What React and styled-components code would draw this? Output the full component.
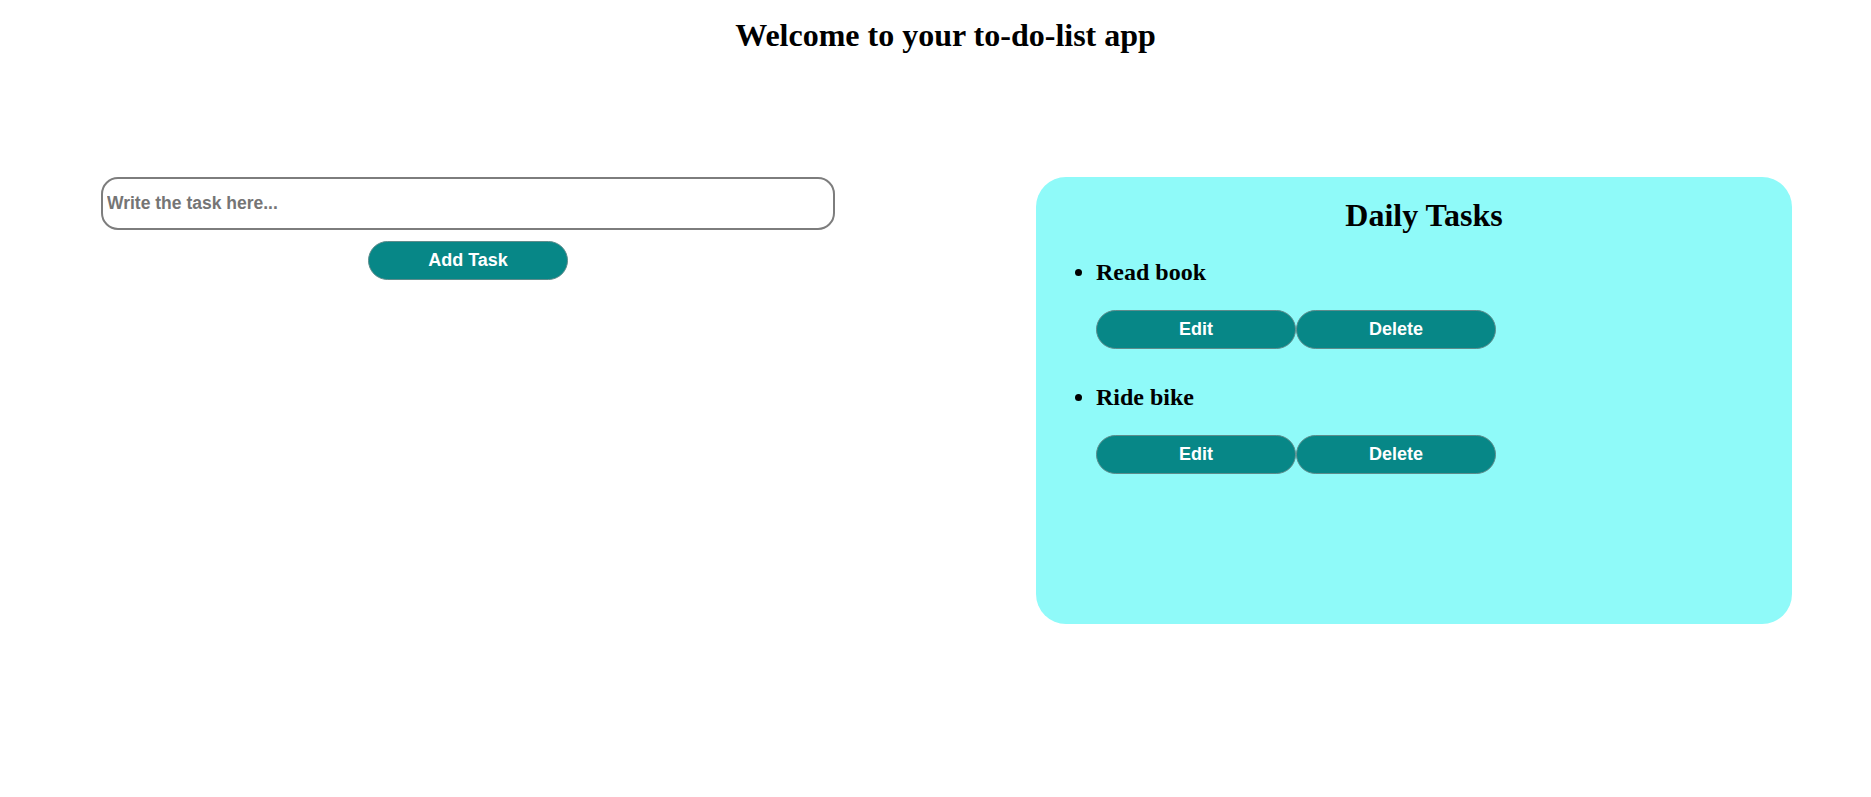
import React, { useState } from "react";
import styled, { createGlobalStyle } from "styled-components";

// global page reset
const GlobalStyle = createGlobalStyle`
  body {
    margin: 0;
    background: #ffffff;
    font-family: "Liberation Serif", "Times New Roman", serif;
    color: #000;
  }
`;

const Page = styled.div`
  width: 100%;
  min-height: 100vh;
`;

const Title = styled.h1`
  margin: 0;
  padding: 17px 0 0 20px;
  font-size: 32px;
  line-height: 36px;
  font-weight: 700;
  text-align: center;
`;

const Main = styled.main`
  display: flex;
  align-items: flex-start;
  gap: 201px;
  margin-top: 124px;
  padding-left: 101px;
`;

const InputSection = styled.div`
  width: 734px;
  display: flex;
  flex-direction: column;
  align-items: center;
`;

const TaskInput = styled.input`
  box-sizing: border-box;
  width: 100%;
  height: 53px;
  padding: 0 4px;
  border: 2px solid #7d7d7d;
  border-radius: 17px;
  font-family: "Liberation Sans", Arial, sans-serif;
  font-size: 17.5px;
  font-weight: 700;
  color: #333;
  outline: none;

  &::placeholder {
    color: #757575;
  }
`;

const Button = styled.button`
  box-sizing: border-box;
  width: 200px;
  height: 39px;
  margin-top: ${(p) => p.$top || 0}px;
  padding: 0;
  border: 1px solid #5e8c8c;
  border-radius: 20px;
  background-color: #078787;
  color: #ffffff;
  font-family: "Liberation Sans", Arial, sans-serif;
  font-size: 18px;
  font-weight: 700;
  cursor: pointer;
`;

const Panel = styled.section`
  box-sizing: border-box;
  width: 756px;
  height: 447px;
  padding: 20px 0 0 20px;
  border-radius: 30px;
  background-color: #8ffaf9;
`;

const PanelTitle = styled.h2`
  margin: 0;
  font-size: 32px;
  line-height: 36px;
  font-weight: 700;
  text-align: center;
`;

const List = styled.ul`
  margin: 25px 0 0;
  padding-left: 40px;
`;

const Item = styled.li`
  margin-bottom: 34px;
  font-size: 24px;
`;

const ItemText = styled.div`
  font-size: 24px;
  line-height: 28px;
  font-weight: 700;
  margin-bottom: 24px;
`;

const ButtonRow = styled.div`
  display: flex;
`;

const App = () => {
  const [tasks] = useState(["Read book", "Ride bike"]);
  const [text, setText] = useState("");

  return (
    <Page>
      <GlobalStyle />
      <Title>Welcome to your to-do-list app</Title>
      <Main>
        <InputSection>
          <TaskInput
            placeholder="Write the task here..."
            value={text}
            onChange={(e) => setText(e.target.value)}
          />
          <Button $top={11}>Add Task</Button>
        </InputSection>
        <Panel>
          <PanelTitle>Daily Tasks</PanelTitle>
          <List>
            {tasks.map((task) => (
              <Item key={task}>
                <ItemText>{task}</ItemText>
                <ButtonRow>
                  <Button>Edit</Button>
                  <Button>Delete</Button>
                </ButtonRow>
              </Item>
            ))}
          </List>
        </Panel>
      </Main>
    </Page>
  );
};

export default App;
